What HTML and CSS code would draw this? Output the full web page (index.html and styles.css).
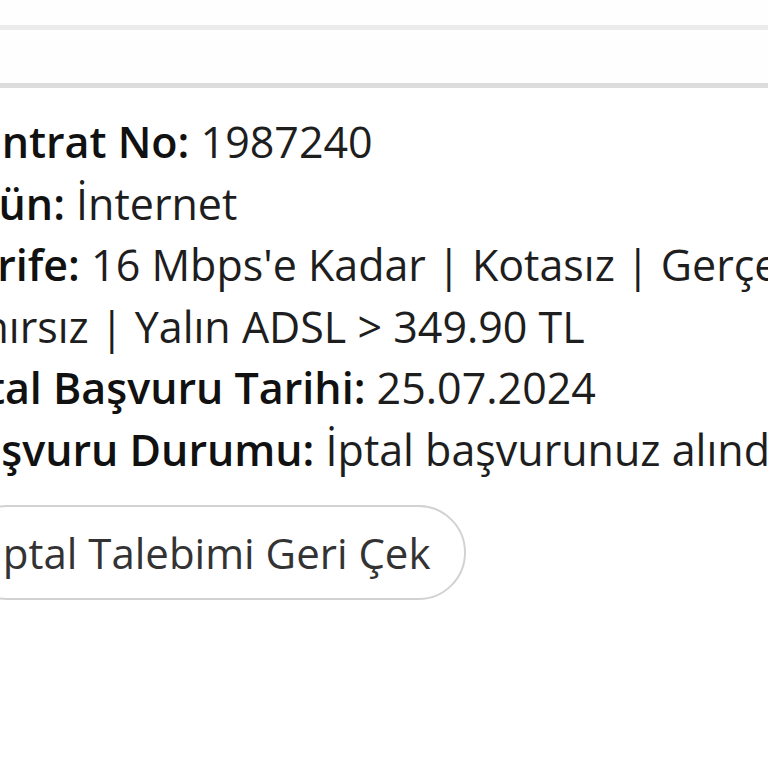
FILE: index.html
```html
<!DOCTYPE html>
<html lang="tr">
<head>
<meta charset="utf-8">
<title>İptal Başvurusu</title>
<link rel="stylesheet" href="styles.css">
</head>
<body>
<div class="page">
  <div class="top-strip"></div>
  <div class="sub-strip"></div>
  <div class="details">
    <p class="row"><span class="label">Kontrat No:</span> 1987240</p>
    <p class="row"><span class="label">Ürün:</span> İnternet</p>
    <p class="row"><span class="label">Tarife:</span> 16 Mbps'e Kadar | Kotasız | Gerçek Sınırsız | Yalın ADSL &gt; 349.90 TL</p>
    <p class="row"><span class="label">İptal Başvuru Tarihi:</span> 25.07.2024</p>
    <p class="row"><span class="label">Başvuru Durumu:</span> İptal başvurunuz alındı.</p>
    <div class="actions">
      <button class="btn-withdraw" type="button">İptal Talebimi Geri Çek</button>
    </div>
  </div>
</div>
</body>
</html>
```
FILE: styles.css
```css
html, body {
  margin: 0;
  padding: 0;
  background: #ffffff;
}
.page {
  width: 768px;
  height: 768px;
  overflow: hidden;
  font-family: "Open Sans", "Noto Sans", sans-serif;
  color: #222222;
}
.top-strip {
  height: 25px;
  border-bottom: 5px solid #ebebeb;
  background: #fefefe;
}
.sub-strip {
  height: 53px;
  border-bottom: 5px solid #dcdcdc;
  background: #fefefe;
}
.details {
  width: 900px;
  margin-left: -52px;
  padding-top: 23px;
}
.row {
  margin: 0;
  font-size: 43px;
  line-height: 61.5px;
  color: #1e1e1e;
}
.label {
  font-weight: 600;
  color: #111111;
}
.actions {
  display: flex;
  padding-top: 25px;
}
.btn-withdraw {
  font-family: "Open Sans", "Noto Sans", sans-serif;
  font-size: 42px;
  color: #333333;
  background: #ffffff;
  border: 2px solid #d2d2d2;
  border-radius: 48px;
  height: 95px;
  padding: 0 33px 0 30px;
  margin-left: 11px;
}
```
